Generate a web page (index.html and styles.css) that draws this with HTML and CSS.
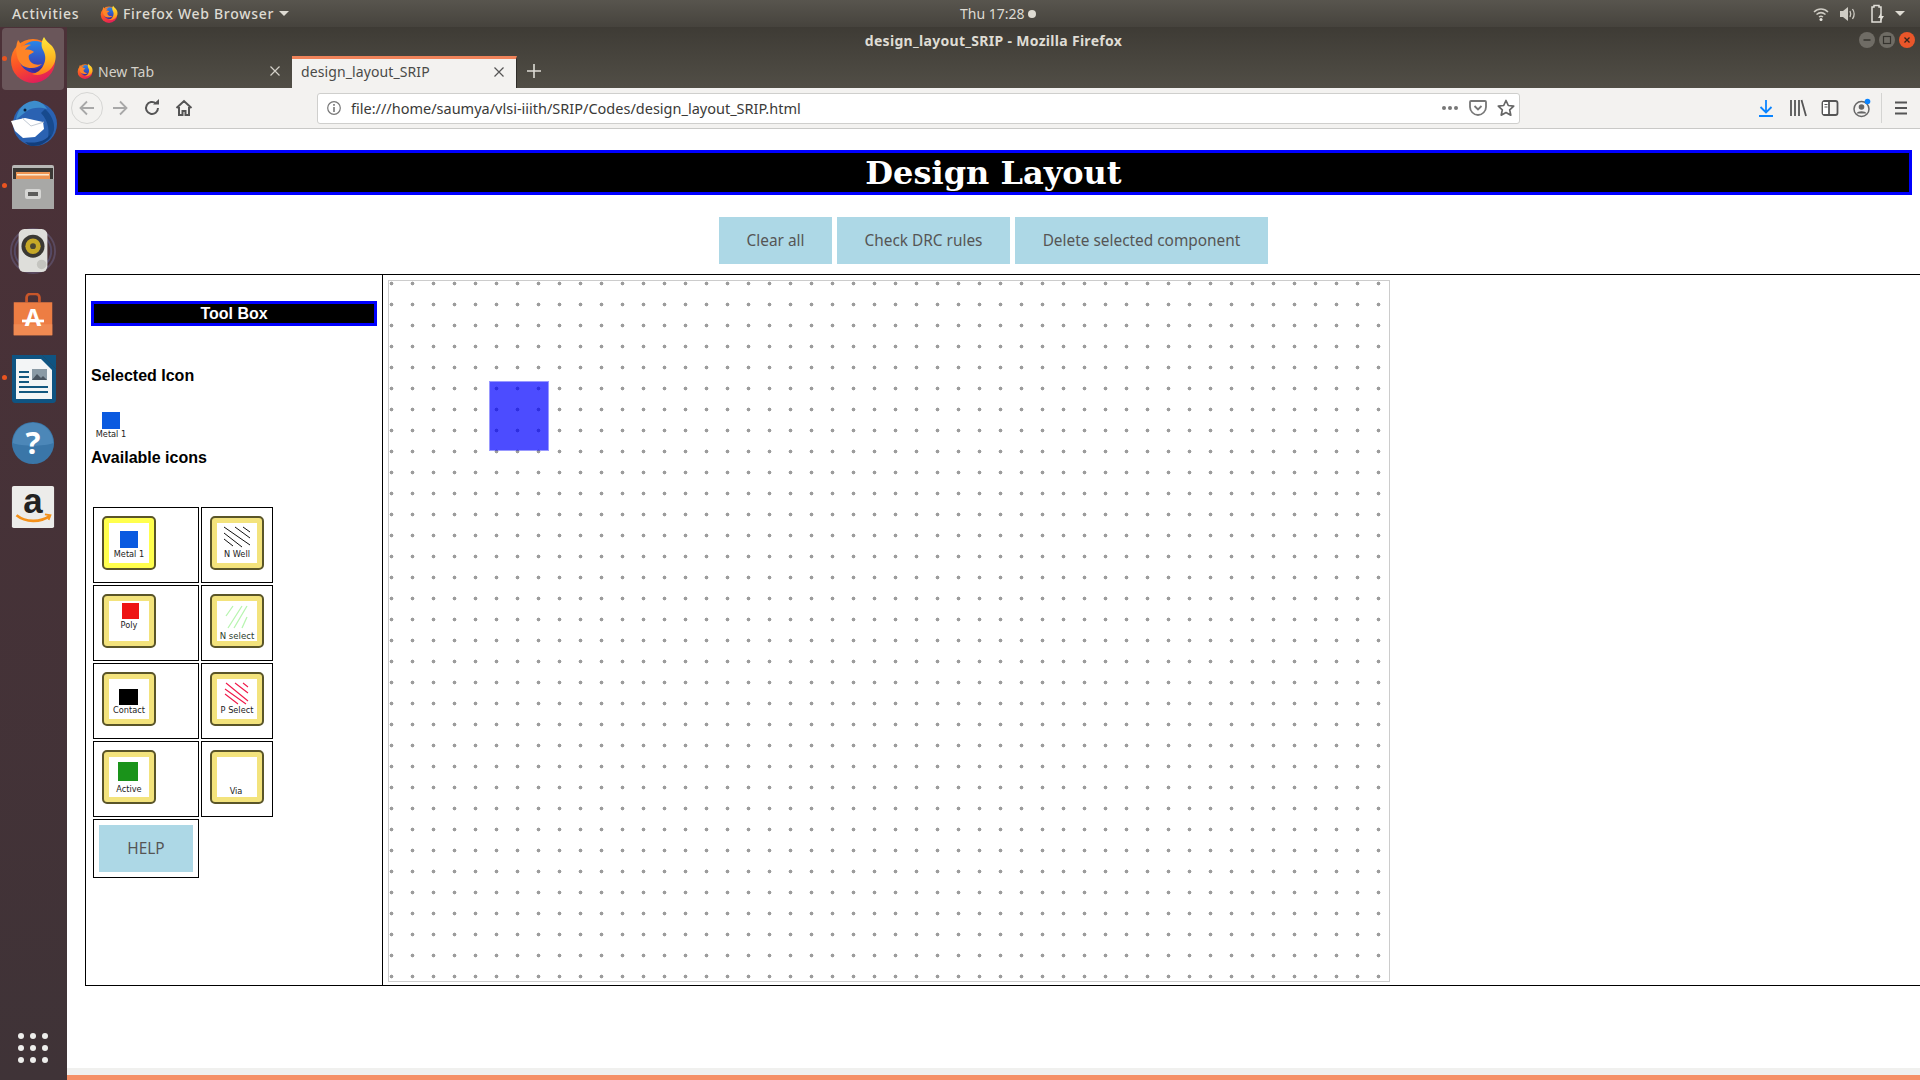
FILE: index.html
```html
<!DOCTYPE html>
<html lang="en">
<head>
    <meta charset="UTF-8">
    <title>design_layout_SRIP - Mozilla Firefox</title>
    <link rel="stylesheet" href="styles.css">
</head>
<body>
    <svg class="defs" width="0" height="0">
        <defs>
            <linearGradient id="foxBody" x1="0.2" y1="0" x2="0.6" y2="1">
                <stop offset="0" stop-color="#ff8a1e"/>
                <stop offset="0.55" stop-color="#fb4d28"/>
                <stop offset="1" stop-color="#e01c5c"/>
            </linearGradient>
            <linearGradient id="foxFlame" x1="0" y1="0" x2="0" y2="1">
                <stop offset="0" stop-color="#ffe83a"/>
                <stop offset="0.6" stop-color="#ffb320"/>
                <stop offset="1" stop-color="#ff7a1e"/>
            </linearGradient>
            <linearGradient id="foxGlobe" x1="0" y1="0" x2="0" y2="1">
                <stop offset="0" stop-color="#2a86e8"/>
                <stop offset="1" stop-color="#3a2fa6"/>
            </linearGradient>
            <symbol id="firefox" viewBox="0 0 48 48">
                <circle cx="24" cy="26" r="22" fill="url(#foxBody)"/>
                <circle cx="26" cy="22" r="16" fill="url(#foxGlobe)"/>
                <path d="M9 5c2 2 3 5 3 7 3-2 7-3 10-2-3 1-5 3-6 5 3-1 7 0 9 2l-5 3c-1 2 0 6 3 8 3 2 7 2 10 1-5 5-13 5-19 2C8 27 5 14 9 5z" fill="#ff8427"/>
                <path d="M21 33c6 2 13 0 17-6l1 5c-4 6-13 8-18 1z" fill="#3a2a98"/>
                <path d="M35 2c-3 5-3 9-1 13 3 5 3 11 0 16-2 4-6 7-11 8 9 3 18-2 22-10 3-6 2-13-2-18-3-3-6-5-8-9z" fill="url(#foxFlame)"/>
            </symbol>
            <symbol id="thunderbird" viewBox="0 0 48 48">
                <circle cx="26" cy="25" r="22" fill="#2a62b2"/>
                <path d="M36 10c6 5 10 13 9 21-1 5-4 9-7 11 3-8 2-20-6-28z" fill="#174a8e"/>
                <path d="M22 47c10 1 18-5 20-12-6 7-14 10-26 8 2 2 4 3 6 4z" fill="#123e7c"/>
                <path d="M7 21C8 12 14 3 24 2c6-1 11 3 14 8-6-2-15-2-20 2-4 3-8 6-11 9z" fill="#3d8dcc"/>
                <circle cx="16" cy="11" r="1.500" fill="#0a1e3a"/>
                <path d="M2 22l14-3 18 4 1 7-9 8-12 1-8-7z" fill="#fff"/>
                <path d="M13 19l9 8 13-4" fill="none" stroke="#c2cad4" stroke-width="1"/>
            </symbol>
            <symbol id="files" viewBox="0 0 48 48">
                <rect x="3" y="2" width="42" height="44" rx="2" fill="#b8b8b6"/>
                <rect x="4" y="5" width="40" height="11" fill="#3b3936"/>
                <rect x="7" y="9" width="34" height="7" fill="#ee9452"/>
                <rect x="8" y="11" width="32" height="1.500" fill="#fbe9d0"/>
                <rect x="3" y="16" width="42" height="30" fill="#a8a8a6"/>
                <rect x="16" y="26" width="16" height="10" rx="2" fill="#d6d6d4"/>
                <rect x="19" y="29" width="10" height="4" fill="#5c5c5a"/>
            </symbol>
            <symbol id="speaker" viewBox="0 0 48 48">
                <circle cx="24" cy="24" r="23" fill="none" stroke="#5a4a60" stroke-width="2"/>
                <circle cx="24" cy="24" r="19" fill="none" stroke="#554a66" stroke-width="2"/>
                <rect x="9" y="1" width="30" height="45" rx="6" fill="#dededa"/>
                <circle cx="24" cy="19" r="12" fill="#3a3833"/>
                <circle cx="24" cy="19" r="8" fill="#c6a827"/>
                <circle cx="24" cy="19" r="3" fill="#4a4634"/>
                <circle cx="33" cy="38" r="5" fill="#c4c4bf"/>
            </symbol>
            <symbol id="software" viewBox="0 0 48 48">
                <path d="M17 10V5c0-2 2-4 4-4h6c2 0 4 2 4 4v5" fill="none" stroke="#c8562a" stroke-width="3"/>
                <path d="M3 10h42v36H3z" fill="#ed7d43"/>
                <path d="M3 34h42v12H3z" fill="#f08a52"/>
                <text class="bag-letter" x="24" y="36" text-anchor="middle">A</text>
                <rect x="12" y="29" width="24" height="3" fill="#fff"/>
            </symbol>
            <symbol id="writer" viewBox="0 0 48 48">
                <path d="M3 0h30l14 14v31c0 1-1 3-3 3H6c-2 0-3-2-3-3z" fill="#0f5482"/>
                <path d="M7 4h25l11 11v29H7z" fill="#f3f5f6"/>
                <path d="M33 0h14v14z" fill="#0f5482"/>
                <rect x="10" y="16" width="10" height="2" fill="#12577f"/>
                <rect x="10" y="21" width="10" height="2" fill="#12577f"/>
                <rect x="10" y="26" width="10" height="2" fill="#12577f"/>
                <rect x="23" y="14" width="15" height="11" fill="#8a9aa5"/>
                <path d="M23 25l5-6 4 4 2-2 4 4v0z" fill="#4a5560"/>
                <rect x="10" y="31" width="29" height="2" fill="#12577f"/>
                <rect x="10" y="36" width="29" height="2" fill="#12577f"/>
            </symbol>
            <symbol id="help" viewBox="0 0 48 48">
                <circle cx="24" cy="24" r="23" fill="#3a76a8"/>
                <path d="M2 24a22 22 0 0 1 44 0c-10 4-34 4-44 0z" fill="#4c87b8"/>
                <text class="help-mark" x="24" y="36" text-anchor="middle">?</text>
            </symbol>
            <symbol id="amazon" viewBox="0 0 48 48">
                <rect x="1" y="1" width="46" height="46" rx="2" fill="#ececea"/>
                <text class="amazon-letter" x="24" y="31" text-anchor="middle">a</text>
                <path d="M6 33c10 8 26 8 36 1" fill="none" stroke="#f39019" stroke-width="3"/>
                <path d="M37 32l6 1-2 5" fill="none" stroke="#f39019" stroke-width="2"/>
            </symbol>
        </defs>
    </svg>

    <div class="top-bar">
        <div class="top-left">
            <span class="activities">Activities</span>
            <svg class="app-icon" width="18" height="18"><use href="#firefox"/></svg>
            <span class="app-name">Firefox Web Browser</span>
            <span class="caret"></span>
        </div>
        <div class="clock">Thu 17:28<span class="clock-dot"></span></div>
        <div class="tray">
            <svg width="16" height="16" viewBox="0 0 16 16"><path d="M1 6c4-4 10-4 14 0M3.500 8.500c3-2.500 6-2.500 9 0M6 11c1.500-1 2.500-1 4 0" fill="none" stroke="#cfccc4" stroke-width="1.500"/><circle cx="8" cy="13.500" r="1.500" fill="#e8e6df"/></svg>
            <svg width="18" height="16" viewBox="0 0 18 16"><path d="M1 5h3l5-4v14l-5-4H1z" fill="#cfccc4"/><path d="M11 5c1 2 1 4 0 6M13.500 3c2 3 2 7 0 10" fill="none" stroke="#cfccc4" stroke-width="1.300"/></svg>
            <svg class="tray-battery" width="16" height="20" viewBox="0 0 16 20"><path d="M4 3V1.500h5V3h2v15H2V3z" fill="none" stroke="#e2e0d9" stroke-width="1.500"/><path d="M11 9l-3 5h3l-1 4 4-6h-3z" fill="#e2e0d9"/></svg>
            <span class="caret caret-tray"></span>
        </div>
    </div>

    <div class="desktop">
        <nav class="dock">
            <div class="dock-item dock-active"><span class="run-dot"></span><svg width="48" height="48"><use href="#firefox"/></svg></div>
            <div class="dock-item"><svg width="48" height="48"><use href="#thunderbird"/></svg></div>
            <div class="dock-item"><span class="run-dot"></span><svg width="48" height="48"><use href="#files"/></svg></div>
            <div class="dock-item"><svg width="48" height="46"><use href="#speaker"/></svg></div>
            <div class="dock-item"><svg width="44" height="44"><use href="#software"/></svg></div>
            <div class="dock-item"><span class="run-dot"></span><svg width="48" height="48"><use href="#writer"/></svg></div>
            <div class="dock-item"><svg width="44" height="44"><use href="#help"/></svg></div>
            <div class="dock-item"><svg width="44" height="44"><use href="#amazon"/></svg></div>
            <div class="app-grid">
                <span></span><span></span><span></span>
                <span></span><span></span><span></span>
                <span></span><span></span><span></span>
            </div>
        </nav>

        <div class="browser">
            <div class="window-head">
                <div class="title-row">
                    <span class="win-title">design_layout_SRIP - Mozilla Firefox</span>
                    <div class="win-controls">
                        <span class="win-btn"><svg width="16" height="16" viewBox="0 0 16 16"><path d="M4.500 8h7" stroke="#35332e" stroke-width="1.500"/></svg></span>
                        <span class="win-btn"><svg width="16" height="16" viewBox="0 0 16 16"><rect x="4.500" y="4.500" width="7" height="7" fill="none" stroke="#35332e" stroke-width="1.200"/></svg></span>
                        <span class="win-btn win-close"><svg width="16" height="16" viewBox="0 0 16 16"><path d="M5.500 5.500l5 5M10.500 5.500l-5 5" stroke="#35251c" stroke-width="1.300"/></svg></span>
                    </div>
                </div>
                <div class="tab-row">
                    <div class="tab">
                        <svg width="16" height="16"><use href="#firefox"/></svg>
                        <span class="tab-label">New Tab</span>
                        <svg class="tab-close" width="10" height="10" viewBox="0 0 10 10"><path d="M.5.5l9 9M9.500.5l-9 9" stroke="#d4d1c9" stroke-width="1.200"/></svg>
                    </div>
                    <div class="tab tab-active">
                        <span class="tab-label">design_layout_SRIP</span>
                        <svg class="tab-close" width="10" height="10" viewBox="0 0 10 10"><path d="M.5.5l9 9M9.500.5l-9 9" stroke="#555" stroke-width="1.200"/></svg>
                    </div>
                    <svg class="new-tab" width="16" height="16" viewBox="0 0 16 16"><path d="M8 1v14M1 8h14" stroke="#dedcd5" stroke-width="1.600"/></svg>
                </div>
            </div>

            <div class="nav-bar">
                <span class="nav-btn nav-back"><svg width="20" height="20" viewBox="0 0 20 20"><path d="M17 10H4M10 3.500L3.500 10l6.500 6.500" fill="none" stroke="#a8a8a8" stroke-width="1.800"/></svg></span>
                <span class="nav-btn nav-fwd"><svg width="20" height="20" viewBox="0 0 20 20"><path d="M3 10h13M10 3.500l6.500 6.500-6.500 6.500" fill="none" stroke="#a8a8a8" stroke-width="1.800"/></svg></span>
                <span class="nav-btn"><svg width="18" height="18" viewBox="0 0 18 18"><path d="M15 9a6 6 0 1 1-2-4.500" fill="none" stroke="#555" stroke-width="2"/><path d="M10 5.500h6V0z" fill="#555"/></svg></span>
                <span class="nav-btn"><svg width="18" height="18" viewBox="0 0 18 18"><path d="M1.500 9L9 2l7.500 7M4 8v8h3.500v-4h3v4H14V8" fill="none" stroke="#555" stroke-width="2"/></svg></span>
                <div class="url-bar">
                    <svg width="16" height="16" viewBox="0 0 16 16"><circle cx="8" cy="8" r="6.300" fill="none" stroke="#777" stroke-width="1.200"/><rect x="7.200" y="7" width="1.600" height="5" fill="#777"/><rect x="7.200" y="4" width="1.600" height="1.800" fill="#777"/></svg>
                    <span class="url-text">file:///home/saumya/vlsi-iiith/SRIP/Codes/design_layout_SRIP.html</span>
                    <svg class="url-more" width="18" height="6" viewBox="0 0 18 6"><circle cx="3" cy="3" r="2" fill="#777"/><circle cx="9" cy="3" r="2" fill="#777"/><circle cx="15" cy="3" r="2" fill="#777"/></svg>
                    <svg class="url-pocket" width="18" height="18" viewBox="0 0 18 18"><path d="M2 2h14c.5 0 1 .5 1 1v5c0 4-3.500 8-8 8s-8-4-8-8V3c0-.5.500-1 1-1z" fill="none" stroke="#777" stroke-width="1.800"/><path d="M5.500 7L9 10.500 12.500 7" fill="none" stroke="#777" stroke-width="1.800"/></svg>
                    <svg class="url-star" width="18" height="18" viewBox="0 0 18 18"><path d="M9 1.500l2.300 5 5.400.6-4 3.700 1.100 5.400L9 13.500l-4.800 2.700 1.100-5.400-4-3.700 5.400-.6z" fill="none" stroke="#666" stroke-width="1.700" stroke-linejoin="round"/></svg>
                </div>
                <span class="nav-btn nav-download"><svg width="16" height="18" viewBox="0 0 16 18"><path d="M8 1v12M2.500 8L8 13.500 13.500 8" fill="none" stroke="#0a84ff" stroke-width="1.800"/><rect x="1" y="16" width="14" height="2" fill="#0a84ff"/></svg></span>
                <span class="nav-btn"><svg width="18" height="18" viewBox="0 0 18 18"><path d="M2 1v16M6 1v16M10 1v16M12.500 1l4.500 16" fill="none" stroke="#555" stroke-width="1.800"/></svg></span>
                <span class="nav-btn"><svg width="18" height="18" viewBox="0 0 18 18"><rect x="1.500" y="2" width="15" height="14" rx="2" fill="none" stroke="#555" stroke-width="1.800"/><rect x="2" y="3" width="6" height="12" fill="#fff"/><path d="M8 2v14" stroke="#555" stroke-width="1.800"/><path d="M3.500 5.500h3M3.500 8h3" stroke="#555"/></svg></span>
                <span class="nav-btn"><svg width="20" height="20" viewBox="0 0 20 20"><circle cx="9.500" cy="11" r="7.500" fill="none" stroke="#666" stroke-width="1.500"/><circle cx="9.500" cy="9" r="2.800" fill="#666"/><path d="M4.500 15.500c1-3 9-3 10 0" fill="#666"/><circle cx="15.500" cy="3.500" r="2.800" fill="#0a84ff"/></svg></span>
                <span class="nav-sep"></span>
                <span class="nav-btn nav-menu"><svg width="14" height="14" viewBox="0 0 14 14"><path d="M1 1.500h12M1 7h12M1 12.500h12" stroke="#555" stroke-width="2"/></svg></span>
            </div>

            <main class="page">
                <h1 class="page-title">Design Layout</h1>
                <div class="actions">
                    <button class="btn btn-clear">Clear all</button>
                    <button class="btn btn-drc">Check DRC rules</button>
                    <button class="btn btn-delete">Delete selected component</button>
                </div>

                <div class="workspace">
                    <aside class="toolbox">
                        <h2 class="toolbox-title">Tool Box</h2>
                        <h3 class="toolbox-head head-selected">Selected Icon</h3>
                        <svg class="selected-icon" width="40" height="30" viewBox="0 0 40 30">
                            <rect x="9" y="1" width="18" height="17" fill="#0a5ae0"/>
                            <text class="icon-label" x="18" y="26" text-anchor="middle">Metal 1</text>
                        </svg>
                        <h3 class="toolbox-head head-available">Available icons</h3>

                        <div class="icon-table">
                            <div class="icon-cell">
                                <div class="icon-btn icon-btn-on"><svg class="icon-art" viewBox="0 0 40 40">
                                    <rect x="11" y="8" width="18" height="17" fill="#0a5ae0"/>
                                    <text class="icon-label" x="20" y="34" text-anchor="middle">Metal 1</text>
                                </svg></div>
                            </div>
                            <div class="icon-cell">
                                <div class="icon-btn"><svg class="icon-art" viewBox="0 0 40 40">
                                    <path d="M7 4l26 18M7 10l18 14M7 16l9 7M18 4l15 11M26 4l7 5" stroke="#111" stroke-width="1" fill="none"/>
                                    <text class="icon-label" x="20" y="34" text-anchor="middle">N Well</text>
                                </svg></div>
                            </div>
                            <div class="icon-cell">
                                <div class="icon-btn"><svg class="icon-art" viewBox="0 0 40 40">
                                    <rect x="13" y="2" width="17" height="16" fill="#ee1414"/>
                                    <text class="icon-label" x="20" y="27" text-anchor="middle">Poly</text>
                                </svg></div>
                            </div>
                            <div class="icon-cell">
                                <div class="icon-btn"><svg class="icon-art" viewBox="0 0 40 40">
                                    <path d="M9 15l7-10M11 27L25 5M17 27L30 5M25 27l5-11" stroke="#b8f5b0" stroke-width="1.300" fill="none"/>
                                    <text class="icon-label icon-label-big" x="20" y="38" text-anchor="middle">N select</text>
                                </svg></div>
                            </div>
                            <div class="icon-cell">
                                <div class="icon-btn"><svg class="icon-art" viewBox="0 0 40 40">
                                    <rect x="10" y="10" width="19" height="16" fill="#000"/>
                                    <text class="icon-label" x="20" y="34" text-anchor="middle">Contact</text>
                                </svg></div>
                            </div>
                            <div class="icon-cell">
                                <div class="icon-btn"><svg class="icon-art" viewBox="0 0 40 40">
                                    <path d="M9 4l22 18M8 10l21 15M8 15l13 10M18 4l13 10M26 4l5 4" stroke="#f0194a" stroke-width="1.100" fill="none"/>
                                    <text class="icon-label" x="20" y="34" text-anchor="middle">P Select</text>
                                </svg></div>
                            </div>
                            <div class="icon-cell">
                                <div class="icon-btn"><svg class="icon-art" viewBox="0 0 40 40">
                                    <rect x="9" y="5" width="20" height="19" fill="#1a931a"/>
                                    <text class="icon-label" x="20" y="35" text-anchor="middle">Active</text>
                                </svg></div>
                            </div>
                            <div class="icon-cell">
                                <div class="icon-btn"><svg class="icon-art" viewBox="0 0 40 40">
                                    <text class="icon-label" x="19" y="37" text-anchor="middle">Via</text>
                                </svg></div>
                            </div>
                            <div class="icon-cell help-cell">
                                <button class="btn btn-help">HELP</button>
                            </div>
                        </div>
                    </aside>

                    <div class="canvas-wrap">
                        <div class="canvas">
                            <div class="metal-rect"></div>
                        </div>
                    </div>
                </div>
            </main>

            <div class="status-strip"></div>
            <div class="orange-strip"></div>
        </div>
    </div>
</body>
</html>
```

FILE: styles.css
```css
* {
    box-sizing: border-box;
}

html, body {
    margin: 0;
    padding: 0;
    height: 100%;
    overflow: hidden;
}

body {
    display: flex;
    flex-direction: column;
    width: 1920px;
    height: 1080px;
    font-family: "Noto Sans", sans-serif;
    background-color: #fff;
}

.defs {
    position: absolute;
}

.bag-letter {
    font: bold 26px "Noto Sans", sans-serif;
    fill: #fff;
}

.help-mark {
    font: bold 34px "Noto Sans", sans-serif;
    fill: #fff;
}

.amazon-letter {
    font: bold 38px "Liberation Sans", sans-serif;
    fill: #222;
}

/* top panel */
.top-bar {
    display: flex;
    align-items: center;
    height: 27px;
    flex-shrink: 0;
    padding-left: 12px;
    background: linear-gradient(#58554e, #46433d);
    color: #dedbd3;
    font-size: 14px;
}

.top-left {
    display: flex;
    align-items: center;
    width: 948px;
    font-weight: 500;
    letter-spacing: 0.7px;
}

.activities {
    width: 88px;
}

.app-icon {
    margin-right: 5px;
}

.caret {
    width: 0;
    height: 0;
    margin-left: 5px;
    border-left: 5px solid transparent;
    border-right: 5px solid transparent;
    border-top: 5px solid #dedbd3;
}

.clock {
    display: flex;
    align-items: center;
    width: 80px;
}

.clock-dot {
    width: 8px;
    height: 8px;
    margin-left: 3px;
    border-radius: 50%;
    background-color: #dedbd3;
}

.tray {
    display: flex;
    align-items: center;
    gap: 10px;
    margin-left: auto;
    padding-right: 15px;
}

.tray-battery {
    margin-left: 3px;
}

.caret-tray {
    margin-left: -1px;
}

/* dock */
.desktop {
    display: flex;
    flex: 1;
    min-height: 0;
}

.dock {
    display: flex;
    flex-direction: column;
    width: 67px;
    flex-shrink: 0;
    padding: 0 2px;
    background: linear-gradient(#4c3138, #3f3337);
}

.dock-item {
    position: relative;
    display: flex;
    align-items: center;
    justify-content: center;
    height: 64px;
    width: 62px;
}

.dock-active {
    height: 62px;
    margin: 1px 0;
    border-radius: 4px;
    background-color: #6a565a;
}

.run-dot {
    position: absolute;
    left: 0;
    top: 28px;
    width: 5px;
    height: 5px;
    border-radius: 50%;
    background-color: #e95420;
}

.app-grid {
    display: grid;
    grid-template-columns: repeat(3, 6px);
    gap: 6px;
    margin: auto 0 17px 16px;
}

.app-grid span {
    width: 6px;
    height: 6px;
    border-radius: 50%;
    background-color: #eeeeec;
}

/* browser chrome */
.browser {
    display: flex;
    flex-direction: column;
    flex: 1;
    min-width: 0;
}

.window-head {
    height: 61px;
    flex-shrink: 0;
    background: linear-gradient(#3e3b35, #514e46);
}

.title-row {
    position: relative;
    display: flex;
    align-items: center;
    justify-content: center;
    height: 29px;
    padding-bottom: 2px;
    color: #dfdcd4;
    font-size: 14px;
    font-weight: 700;
    letter-spacing: 0.3px;
}

.win-controls {
    position: absolute;
    right: 5px;
    top: 5px;
    display: flex;
    gap: 4px;
}

.win-btn {
    display: block;
    width: 16px;
    height: 16px;
    border-radius: 50%;
    background-color: #6f6c65;
}

.win-close {
    background-color: #e9562a;
}

.tab-row {
    display: flex;
    align-items: stretch;
    height: 32px;
}

.tab {
    display: flex;
    align-items: center;
    width: 225px;
    padding-left: 10px;
    padding-bottom: 2px;
    color: #d4d1c9;
    font-size: 14px;
}

.tab-label {
    margin-left: 5px;
}

.tab-close {
    margin-left: auto;
    margin-right: 12px;
}

.tab-active {
    padding-left: 4px;
    padding-bottom: 4px;
    border-top: 3px solid #f0835a;
    border-right: 1px solid #2e2c28;
    background-color: #f3f2f0;
    color: #4a4a48;
    letter-spacing: 0.1px;
}

.new-tab {
    align-self: center;
    margin-left: 9px;
    margin-bottom: 2px;
}

.nav-bar {
    display: flex;
    align-items: center;
    height: 41px;
    flex-shrink: 0;
    padding-left: 4px;
    border-bottom: 1px solid #c9c9c7;
    background-color: #f3f2f0;
}

.nav-btn {
    display: flex;
    align-items: center;
    justify-content: center;
    width: 32px;
    height: 32px;
    flex-shrink: 0;
}

.nav-back {
    border: 1px solid #d6d6d4;
    border-radius: 50%;
}

.nav-fwd {
    margin-left: 1px;
}

.url-bar {
    display: flex;
    align-items: center;
    width: 1203px;
    height: 31px;
    margin-left: 117px;
    margin-right: 230px;
    padding-left: 8px;
    flex-shrink: 0;
    border: 1px solid #cfcfcd;
    border-radius: 3px;
    background-color: #fff;
}

.url-text {
    margin-left: 9px;
    color: #3a3a38;
    font-size: 14.5px;
}

.url-more {
    margin-left: auto;
}

.url-pocket {
    margin-left: 10px;
}

.url-star {
    margin: 0 4px 0 10px;
}

.nav-sep {
    width: 1px;
    height: 30px;
    margin-left: 3px;
    background-color: #d4d4d2;
}

.nav-menu {
    margin-left: 3px;
}

/* page */
.page {
    flex: 1;
    min-height: 0;
    overflow: hidden;
    background-color: #fff;
}

.page-title {
    height: 45px;
    margin: 21px 8px 0;
    border: 3px solid #0000ff;
    background-color: #000;
    color: #fff;
    font-family: "DejaVu Serif", serif;
    font-size: 32px;
    font-weight: 700;
    line-height: 41px;
    text-align: center;
}

.actions {
    display: flex;
    justify-content: center;
    gap: 5px;
    margin-top: 22px;
}

.btn {
    height: 47px;
    padding: 0;
    border: none;
    background-color: #add8e6;
    color: #555;
    font-family: "Noto Sans", sans-serif;
    font-size: 15.4px;
}

.btn-clear {
    width: 113px;
}

.btn-drc {
    width: 173px;
}

.btn-delete {
    width: 253px;
}

.workspace {
    display: flex;
    width: 1900px;
    height: 712px;
    margin: 10px 0 0 18px;
    border: 1px solid #000;
}

.toolbox {
    width: 297px;
    flex-shrink: 0;
    padding: 26px 0 0 5px;
    border-right: 1px solid #000;
}

.toolbox-title {
    width: 286px;
    height: 25px;
    margin: 0;
    border: 3px solid #0000ff;
    background-color: #000;
    color: #fff;
    font-family: "Liberation Sans", sans-serif;
    font-size: 16px;
    font-weight: 700;
    line-height: 19px;
    text-align: center;
}

.toolbox-head {
    height: 18px;
    margin: 0;
    color: #000;
    font-family: "Liberation Sans", sans-serif;
    font-size: 16px;
    font-weight: 700;
    line-height: 18px;
}

.head-selected {
    margin-top: 41px;
}

.selected-icon {
    display: block;
    margin-top: 26px;
    margin-left: 2px;
}

.head-available {
    margin-top: 8px;
}

.icon-label {
    font-family: "DejaVu Sans", sans-serif;
    font-size: 8.2px;
    fill: #222;
}

.icon-label-big {
    font-size: 8.6px;
    fill: #2c402c;
}

.icon-table {
    display: grid;
    grid-template-columns: 106px 72px;
    grid-auto-rows: 76px;
    gap: 2px;
    margin: 40px 0 0 2px;
}

.icon-cell {
    padding: 8px 0 0 8px;
    border: 1px solid #000;
}

.icon-btn {
    width: 54px;
    height: 54px;
    padding: 5px;
    border: 2px solid #5a5528;
    border-radius: 5px;
    background-color: #f3e37c;
}

.icon-btn-on {
    background-color: #ffff4d;
}

.icon-art {
    display: block;
    width: 40px;
    height: 40px;
    background-color: #fff;
}

.help-cell {
    height: 59px;
    padding: 5px;
}

.btn-help {
    width: 94px;
}

.canvas-wrap {
    padding: 5px 0 0 5px;
}

.canvas {
    position: relative;
    width: 1002px;
    height: 702px;
    border: 1px solid #cccccc;
    background-image: radial-gradient(circle at 10.5px 10.5px, #9c9c9c 1.6px, transparent 2.2px);
    background-size: 21px 21px;
    background-position: -8px -8px;
}

.metal-rect {
    position: absolute;
    left: 100px;
    top: 100px;
    width: 60px;
    height: 70px;
    border: 1px solid rgba(0, 0, 255, 0.4);
    background-color: rgba(0, 0, 255, 0.7);
    background-clip: padding-box;
}

.status-strip {
    height: 7px;
    flex-shrink: 0;
    background-color: #f0f0ee;
}

.orange-strip {
    height: 5px;
    flex-shrink: 0;
    background-color: #f58f66;
}
```
